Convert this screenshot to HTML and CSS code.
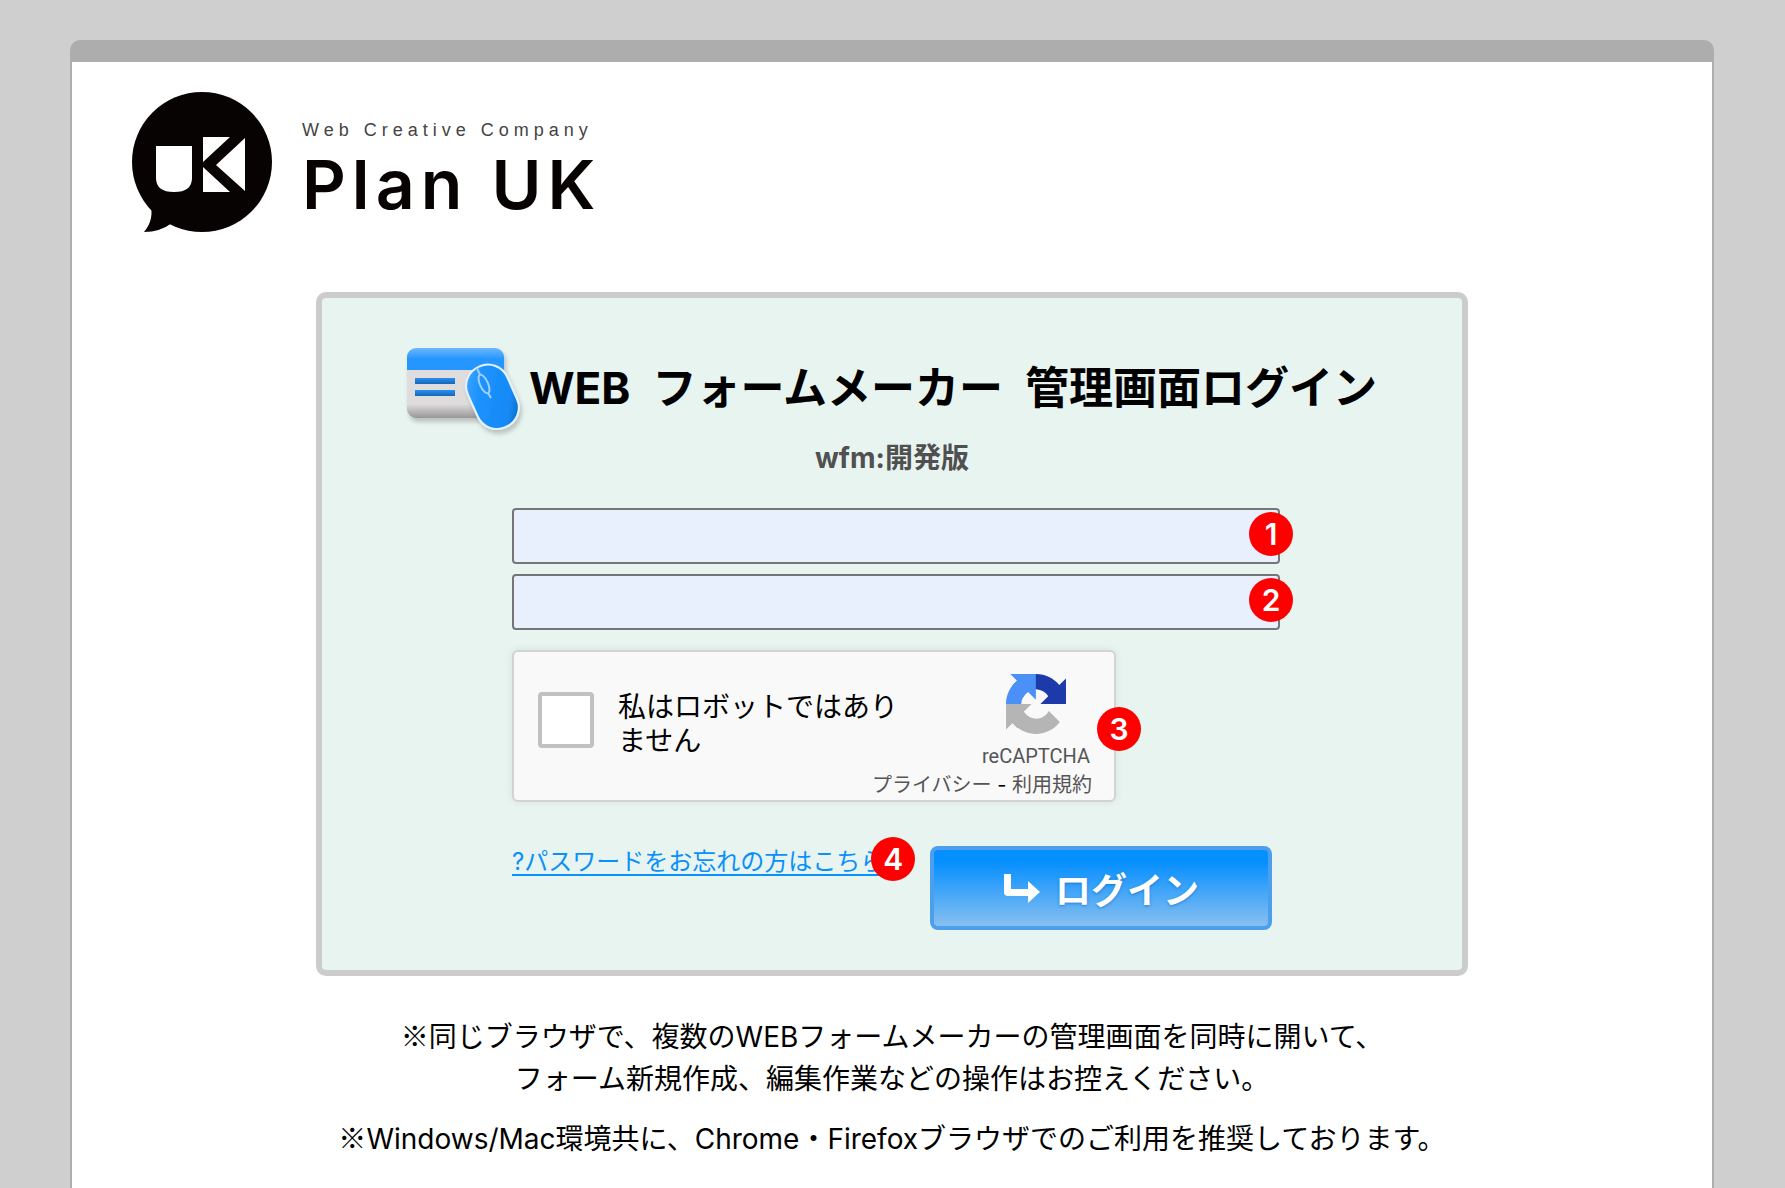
FILE: index.html
```html
<!DOCTYPE html>
<html lang="ja">
<head>
  <meta charset="UTF-8">
  <meta name="viewport" content="width=device-width, initial-scale=1.0">
  <title>WEB フォームメーカー 管理画面ログイン</title>
  <link rel="stylesheet" href="styles.css">
</head>
<body>
  <div class="sheet">
    <header class="logo">
      <svg class="logo-mark" viewBox="0 0 140 140" aria-hidden="true">
        <circle cx="70" cy="70" r="70" fill="#080303"/>
        <path fill="#080303" d="M18 110q5 17-6 30 16 0 28-9l6-21z"/>
        <path fill="#fff" d="M24 54h36v32q0 14-18 14T24 86z"/>
        <path fill="#fff" d="M71 45h27L71 70zM71 75l27 25H71zM113 46v53L84 73z"/>
      </svg>
      <div class="logo-text">
        <p class="tagline">Web Creative Company</p>
        <p class="brand">Plan UK</p>
      </div>
    </header>

    <main>
      <section class="panel">
        <div class="panel-head">
          <svg class="form-icon" viewBox="0 0 116 88" aria-hidden="true">
            <defs>
              <linearGradient id="cardTop" x1="0" y1="0" x2="0" y2="1">
                <stop offset="0" stop-color="#6cb8ff"/>
                <stop offset=".5" stop-color="#2696ff"/>
              </linearGradient>
              <linearGradient id="cardBody" x1="0" y1="0" x2="0" y2="1">
                <stop offset=".8" stop-color="#dedcdd"/>
                <stop offset="1" stop-color="#979596"/>
              </linearGradient>
              <linearGradient id="bar" x1="0" y1="0" x2="0" y2="1">
                <stop offset="0" stop-color="#2b8fee"/>
                <stop offset="1" stop-color="#1467b8"/>
              </linearGradient>
              <linearGradient id="mouse" x1="0" y1="0" x2="1" y2="1">
                <stop offset="0" stop-color="#4aa9ff"/>
                <stop offset=".3" stop-color="#1e93ff"/>
                <stop offset=".75" stop-color="#1489f5"/>
                <stop offset="1" stop-color="#0a5fae"/>
              </linearGradient>
              <filter id="soft" x="-20%" y="-20%" width="150%" height="150%">
                <feDropShadow dx="2" dy="4" stdDeviation="2" flood-opacity=".2"/>
              </filter>
            </defs>
            <g filter="url(#soft)">
              <rect width="97" height="70" rx="9" fill="url(#cardBody)"/>
              <path fill="url(#cardTop)" d="M0 22V9a9 9 0 0 1 9-9h79a9 9 0 0 1 9 9v13z"/>
            </g>
            <path fill="url(#bar)" d="M8 30h40v6H8z"/>
            <path fill="url(#bar)" d="M8 42h40v6H8z"/>
            <g filter="url(#soft)">
              <rect x="64" y="16" width="43" height="66" rx="21" fill="url(#mouse)" stroke="#e6f3ff" stroke-width="2" transform="rotate(-24 85 49)"/>
            </g>
            <g fill="none" stroke="#9fd0ff" stroke-width="2">
              <ellipse cx="77" cy="36" rx="4" ry="10" transform="rotate(-24 77 36)"/>
              <path d="M70 20l3 7M81 45l3 5"/>
            </g>
          </svg>
          <h1>WEB&ensp;フォームメーカー&ensp;管理画面ログイン</h1>
        </div>
        <h2>wfm:開発版</h2>

        <form class="login-form">
          <div class="field">
            <input type="text" name="login_id" aria-label="ログインID">
            <span class="badge">1</span>
          </div>
          <div class="field">
            <input type="password" name="password" aria-label="パスワード">
            <span class="badge">2</span>
          </div>

          <div class="captcha">
            <div class="captcha-main">
              <input type="checkbox" id="robot">
              <label for="robot">私はロボットではありません</label>
              <div class="captcha-brand">
                <svg viewBox="0 0 64 64" aria-hidden="true">
                  <path fill="#1c3aa9" d="M64 31.955l-.033-1.37V4.687l-7.16 7.16C50.948 4.674 42.033.093 32.05.093c-10.4 0-19.622 4.96-25.458 12.64l11.736 11.86a15.55 15.55 0 0 1 4.754-5.334c2.05-1.6 4.952-2.906 8.968-2.906.485 0 .86.057 1.135.163 4.976.393 9.288 3.14 11.828 7.124l-8.307 8.307L64 31.953"/>
                  <path fill="#4a90f7" d="M31.862.094l-1.37.033H4.594l7.16 7.16C4.58 13.147 0 22.06 0 32.046c0 10.4 4.96 19.622 12.64 25.458L24.5 45.768a15.55 15.55 0 0 1-5.334-4.754c-1.6-2.05-2.906-4.952-2.906-8.968 0-.485.057-.86.163-1.135.393-4.976 3.14-9.288 7.124-11.828l8.307 8.307L31.86.095"/>
                  <path fill="#b5b5b5" d="M.001 32.045l.033 1.37v25.898l7.16-7.16c5.86 7.173 14.774 11.754 24.76 11.754 10.4 0 19.622-4.96 25.458-12.64l-11.736-11.86a15.55 15.55 0 0 1-4.754 5.334c-2.05 1.6-4.952 2.906-8.968 2.906-.485 0-.86-.057-1.135-.163-4.976-.393-9.288-3.14-11.828-7.124l8.307-8.307c-10.522.04-22.4.066-27.295-.005"/>
                </svg>
                <span>reCAPTCHA</span>
              </div>
            </div>
            <div class="captcha-terms"><a href="#">プライバシー</a> - <a href="#">利用規約</a></div>
            <span class="badge">3</span>
          </div>

          <div class="actions">
            <div class="forgot">
              <a href="#">?パスワードをお忘れの方はこちら</a>
              <span class="badge">4</span>
            </div>
            <button type="submit">
              <svg viewBox="0 0 38 32" aria-hidden="true">
                <path fill="#fff" d="M1 2h7v15h17V9l12 11-12 11v-7H5q-4 0-4-4z"/>
              </svg>
              ログイン
            </button>
          </div>
        </form>
      </section>

      <div class="notes">
        <p><span class="mark">※</span>同じブラウザで、複数のWEBフォームメーカーの管理画面を同時に開いて、<br>フォーム新規作成、編集作業などの操作はお控えください。</p>
        <p><span class="mark">※</span>Windows/Mac環境共に、Chrome・Firefoxブラウザでのご利用を推奨しております。</p>
      </div>
    </main>
  </div>
</body>
</html>
```
FILE: styles.css
```css
* {
  box-sizing: border-box;
}
body {
  margin: 0;
  padding: 40px 71px 0 70px;
  background-color: #cfcfcf;
  color: #000;
  font-family: Inter, "Noto Sans CJK JP", sans-serif;
  font-size: 28px;
}
h1, h2, p {
  margin: 0;
}
.sheet {
  min-height: calc(100vh - 40px);
  padding: 30px 60px 0;
  background-color: #fff;
  border: 2px solid #adadad;
  border-top-width: 22px;
  border-bottom: none;
  border-radius: 10px 10px 0 0;
}

/* logo */
.logo {
  display: flex;
  gap: 30px;
  color: #080303;
}
.logo-mark {
  width: 140px;
  height: 140px;
}
.logo-text {
  padding-top: 26px;
}
.tagline {
  font-family: "Liberation Sans", sans-serif;
  font-size: 18px;
  line-height: 24px;
  letter-spacing: 5px;
  color: #444;
}
.brand {
  font-size: 68px;
  font-weight: 600;
  line-height: 84px;
  letter-spacing: 6px;
}

/* login panel */
.panel {
  max-width: 1152px;
  margin: 60px auto 0;
  padding: 50px 0 40px;
  background-color: #e8f4f0;
  border: 6px solid #ccc;
  border-radius: 10px;
}
.panel-head {
  display: flex;
  justify-content: center;
  gap: 6px;
}
.form-icon {
  flex: none;
  width: 116px;
  height: 88px;
  overflow: visible;
}
h1 {
  font-size: 44px;
  font-weight: 700;
  line-height: 80px;
}
h2 {
  margin: 6px 0 34px;
  font-size: 28px;
  font-weight: 700;
  line-height: 32px;
  text-align: center;
  color: #505050;
}
.login-form {
  padding: 0 182px 0 190px;
}
.field {
  position: relative;
  margin-bottom: 10px;
}
.field input {
  display: block;
  width: 100%;
  height: 56px;
  padding: 0 12px;
  font-size: 28px;
  background-color: #e8f0fe;
  border: 2px solid #767676;
  border-radius: 4px;
}
.badge {
  position: absolute;
  width: 44px;
  height: 44px;
  border-radius: 50%;
  background-color: #f00;
  color: #fff;
  font-size: 30px;
  font-weight: 600;
  line-height: 44px;
  text-align: center;
}
.field .badge {
  top: 4px;
  right: -13px;
}

/* captcha box */
.captcha {
  position: relative;
  width: 604px;
  margin-top: 20px;
  background-color: #f9f9f9;
  border: 2px solid #d3d3d3;
  border-radius: 6px;
  box-shadow: 0 0 8px rgba(0, 0, 0, 0.08);
}
.captcha-main {
  display: flex;
  align-items: flex-start;
  padding: 22px 24px 0;
}
.captcha input {
  appearance: none;
  flex: none;
  width: 56px;
  height: 56px;
  margin: 18px 24px 0 0;
  background-color: #fff;
  border: 4px solid #c1c1c1;
  border-radius: 4px;
}
.captcha input:checked {
  background-color: #4285f4;
}
.captcha label {
  width: 290px;
  margin-top: 16px;
  line-height: 34px;
}
.captcha-brand {
  display: flex;
  flex-direction: column;
  align-items: center;
  gap: 8px;
  margin-left: auto;
  font-family: Roboto, sans-serif;
  font-size: 20px;
  line-height: 28px;
  color: #555;
}
.captcha-brand svg {
  width: 60px;
  height: 60px;
}
.captcha-terms {
  padding-right: 22px;
  font-size: 20px;
  line-height: 30px;
  text-align: right;
}
.captcha-terms a {
  color: #555;
  text-decoration: none;
}
.captcha .badge {
  top: 55px;
  right: -27px;
}

/* link and button */
.actions {
  display: flex;
  justify-content: space-between;
  align-items: flex-start;
  margin-top: 44px;
  padding-right: 8px;
}
.forgot {
  position: relative;
  font-size: 24px;
  line-height: 32px;
}
.forgot a {
  color: #0a90fb;
  text-decoration-thickness: 2px;
  text-underline-offset: 4px;
}
.forgot .badge {
  top: -9px;
  right: -31px;
}
button {
  display: flex;
  justify-content: center;
  align-items: center;
  gap: 14px;
  width: 342px;
  height: 84px;
  padding: 0;
  border: 4px solid #4b9fec;
  border-radius: 8px;
  background: linear-gradient(#058fff 15%, #88c0f0);
  color: #fff;
  font-family: inherit;
  font-size: 36px;
  font-weight: 700;
  text-shadow: 0 1px 3px rgba(0, 80, 180, 0.5);
  cursor: pointer;
}
button svg {
  width: 38px;
  height: 32px;
}

/* notes */
.notes {
  margin-top: 38px;
  line-height: 42px;
  text-align: center;
}
.notes p + p {
  margin-top: 16px;
}
/* Inter has its own small reference mark, take the full-width one */
.mark {
  font-family: "Noto Sans CJK JP", sans-serif;
}
```
